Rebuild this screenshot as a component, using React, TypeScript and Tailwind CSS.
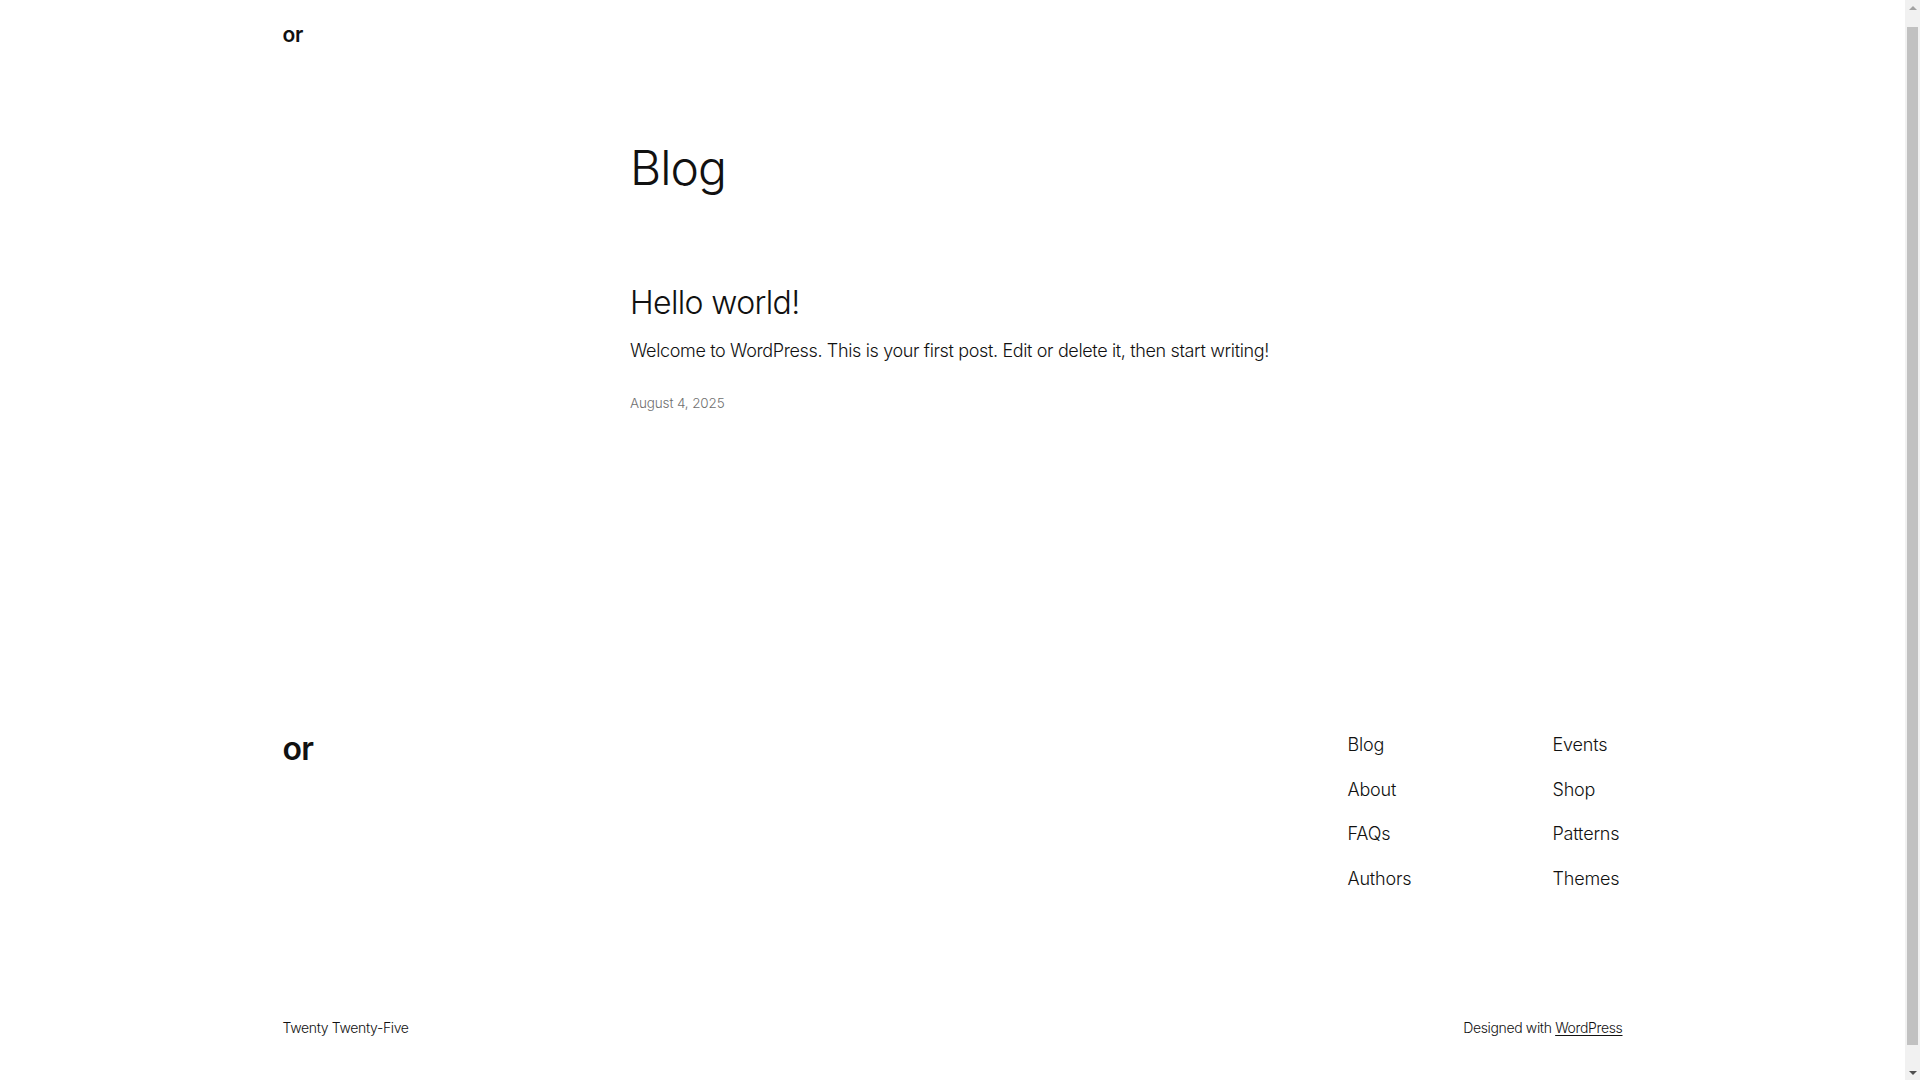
import React from 'react';

const navLeft = ['Blog', 'About', 'FAQs', 'Authors'];
const navRight = ['Events', 'Shop', 'Patterns', 'Themes'];

const App: React.FC = () => {
  return (
    <div className="h-screen flex bg-white text-[#111111] font-['Inter','Noto_Sans',sans-serif]">
      <div className="flex-1 h-full overflow-hidden">
        <div className="min-h-[1112px] flex flex-col">
          {/* header */}
          <header className="w-[1340px] mx-auto pt-[21px]">
            <a href="#" className="block text-[21px] leading-[28px] font-semibold tracking-[-0.01em]">
              or
            </a>
          </header>

          {/* main */}
          <main className="w-[645px] mx-auto mt-[92px]">
            <h1 className="text-[48px] leading-[54px] font-light tracking-[-0.02em]">Blog</h1>

            <article className="mt-[90px]">
              <h2 className="text-[32px] leading-[36px] font-light tracking-[-0.02em]">
                <a href="#">Hello world!</a>
              </h2>
              <p className="mt-[15px] text-[18px] leading-[29px] font-light tracking-[-0.02em]">
                Welcome to WordPress. This is your first post. Edit or delete it, then start writing!
              </p>
              <p className="mt-[29px] text-[13.5px] leading-[18px] font-light text-[#6f6f6f] tracking-[-0.01em]">
                August 4, 2025
              </p>
            </article>
          </main>

          {/* footer */}
          <footer className="w-[1340px] mx-auto mt-[319px] pb-[72px]">
            <div className="flex items-start justify-between">
              <a href="#" className="block text-[32px] leading-[36px] font-semibold tracking-[-0.02em]">
                or
              </a>
              <nav className="w-[275px] grid grid-cols-[205px_1fr]">
                <ul className="flex flex-col gap-[17.5px]">
                  {navLeft.map((item) => (
                    <li key={item} className="text-[18px] leading-[27px] font-light tracking-[-0.01em]">
                      <a href="#">{item}</a>
                    </li>
                  ))}
                </ul>
                <ul className="flex flex-col gap-[17.5px]">
                  {navRight.map((item) => (
                    <li key={item} className="text-[18px] leading-[27px] font-light tracking-[-0.01em]">
                      <a href="#">{item}</a>
                    </li>
                  ))}
                </ul>
              </nav>
            </div>

            <div className="mt-[126px] flex items-center justify-between text-[14px] leading-[20px] font-light tracking-[-0.025em]">
              <p>Twenty Twenty-Five</p>
              <p>
                Designed with{' '}
                <a href="#" className="underline decoration-1 underline-offset-2">
                  WordPress
                </a>
              </p>
            </div>
          </footer>
        </div>
      </div>

      {/* page scrollbar */}
      <div className="w-[15px] shrink-0 h-full bg-[#f1f1f1] flex flex-col items-center justify-between">
        <div className="h-[15px] flex items-center justify-center">
          <div className="w-0 h-0 border-x-[4px] border-x-transparent border-b-[4px] border-b-[#a3a3a3]" />
        </div>
        <div className="w-[11px] h-[1018px] -mt-[8px] bg-[#c1c1c1]" />
        <div className="h-[15px] flex items-center justify-center">
          <div className="w-0 h-0 border-x-[4px] border-x-transparent border-t-[4px] border-t-[#505050]" />
        </div>
      </div>
    </div>
  );
};

export default App;
